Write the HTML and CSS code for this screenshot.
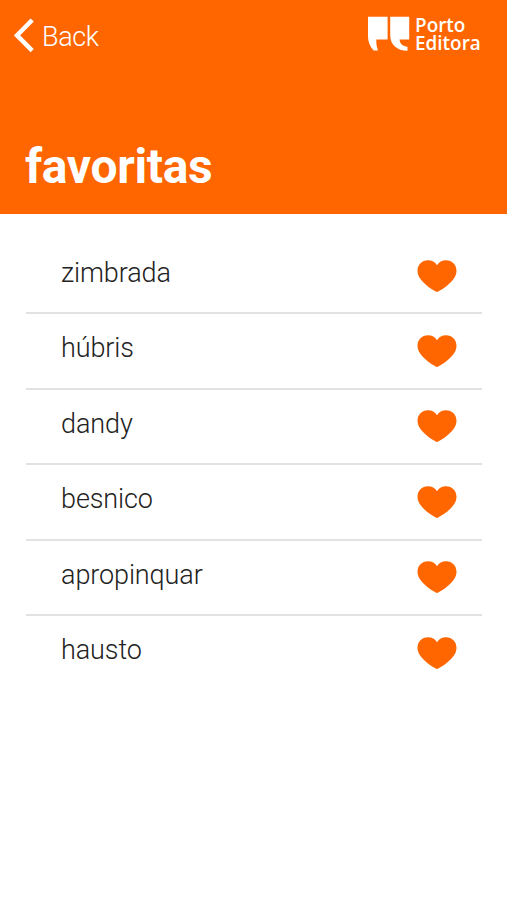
FILE: index.html
```html
<!DOCTYPE html>
<html lang="pt">
<head>
<meta charset="utf-8">
<title>favoritas</title>
<link rel="stylesheet" href="styles.css">
</head>
<body>
<svg class="defs" width="0" height="0"><symbol id="heart" viewBox="0 0 40 32"><path d="M20 32C17 30.700 10 26.500 5.500 21.500C2.500 18.200 .5 15 .5 11C.5 4.500 5 .3 11 .3C15 .3 18 2 20 5.200C22 2 25 .3 29 .3C35 .3 39.500 4.500 39.500 11C39.500 15 37.500 18.200 34.500 21.500C30 26.500 23 30.700 20 32Z"/></symbol></svg>
<header class="header">
  <nav class="bar">
    <a class="back"><svg class="chevron" viewBox="0 0 20 36"><path d="M18.200 2L3 17.300L18.200 32.600"/></svg><span class="back-label">Back</span></a>
    <div class="brand">
      <svg class="mark" viewBox="0 0 42 36"><path d="M0 .7H19.600V23.500H8.300C8.200 27.500 8.600 31 10 34.500H5.700C2 30.500 0 26 0 20.500Z"/><path d="M22.200 .7H41.200V23.500H31.500C32 28 35 30.300 39.500 30.700V34.700C29 34.700 22.200 29 22.200 19Z"/></svg>
      <div class="brand-name"><span>Porto</span><span>Editora</span></div>
    </div>
  </nav>
  <h1 class="title">favoritas</h1>
</header>
<ul class="list">
  <li class="row"><span class="word">zimbrada</span><svg class="heart"><use href="#heart"/></svg></li>
  <li class="row"><span class="word">húbris</span><svg class="heart"><use href="#heart"/></svg></li>
  <li class="row"><span class="word">dandy</span><svg class="heart"><use href="#heart"/></svg></li>
  <li class="row"><span class="word">besnico</span><svg class="heart"><use href="#heart"/></svg></li>
  <li class="row"><span class="word">apropinquar</span><svg class="heart"><use href="#heart"/></svg></li>
  <li class="row"><span class="word">hausto</span><svg class="heart"><use href="#heart"/></svg></li>
</ul>
</body>
</html>
```
FILE: styles.css
```css
* { box-sizing: border-box; }
body { margin: 0; min-height: 900px; background: #fff; font-family: Roboto, sans-serif; }
.defs { display: block; }
.header { height: 214px; background: #ff6600; color: #fff; }
.bar { display: flex; justify-content: space-between; padding: 16px 26px 0 14px; height: 141px; }
.back { display: flex; height: 38px; gap: 8px; }
.chevron { width: 20px; height: 36px; margin-top: 2px; fill: none; stroke: #fff; stroke-width: 4.500; }
.back-label { font-size: 27px; line-height: 43px; font-weight: 350; letter-spacing: -0.4px; }
.brand { display: flex; gap: 5px; }
.mark { width: 42px; height: 36px; fill: #fff; }
.brand-name { display: flex; flex-direction: column; width: 66px; font: 600 19.500px/18px "Open Sans", sans-serif; font-stretch: 88%; white-space: nowrap; transform: scaleX(0.97); transform-origin: left; }
.title { margin: 0; padding-left: 25px; font-size: 48px; line-height: 52px; font-weight: 700; letter-spacing: -0.35px; }
.list { margin: 0; padding: 25px 25px 0 26px; list-style: none; }
.row { display: flex; justify-content: space-between; height: 75.450px; padding: 13px 25px 0 35px; border-bottom: 2px solid #e2e2e2; }
.row:last-child { border-bottom: 0; }
.word { font-size: 27px; line-height: 43px; font-weight: 300; letter-spacing: -0.1px; color: #222; }
.heart { width: 40px; height: 32px; margin-top: 7.500px; fill: #ff6600; }
```
